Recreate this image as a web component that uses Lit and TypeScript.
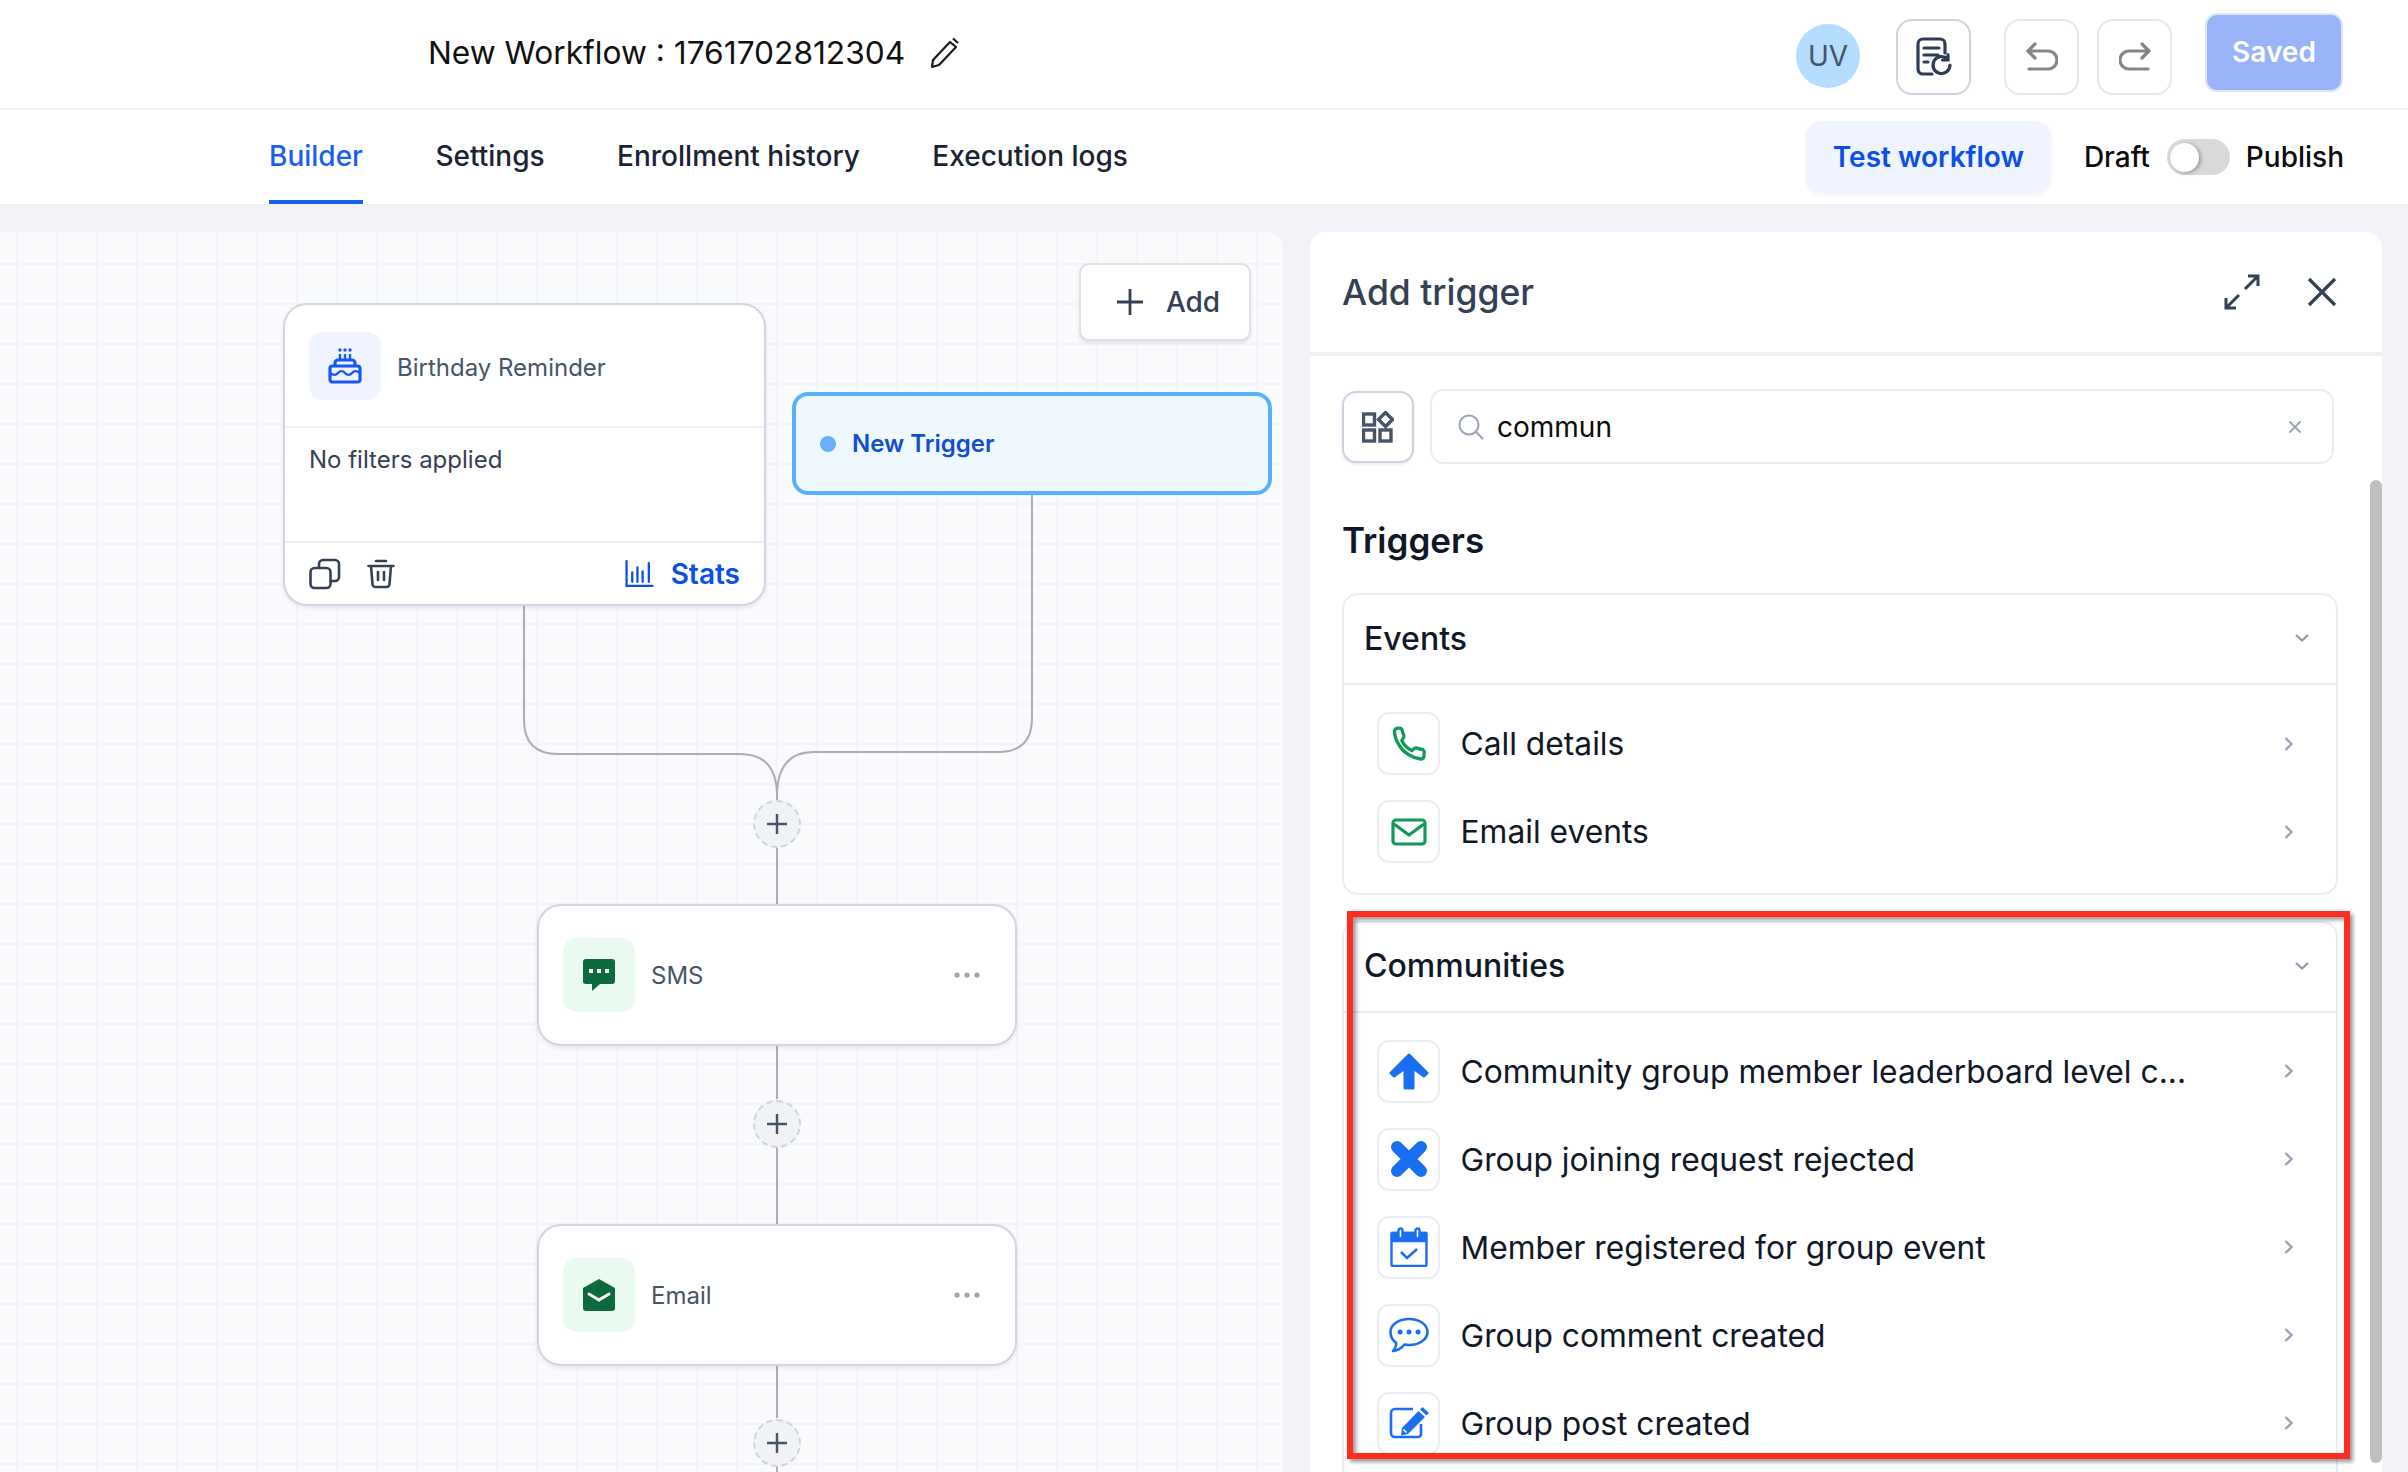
import { LitElement, css, html } from "lit";
import { customElement } from "lit/decorators.js";

const chevronRight = html`<svg class="chev-r" width="10" height="16" viewBox="0 0 10 16" fill="none" stroke="#98a2b8" stroke-width="2.4"><path d="M1.5 2l6 6-6 6" /></svg>`;
const chevronDown = html`<svg width="16" height="10" viewBox="0 0 16 10" fill="none" stroke="#8f99ad" stroke-width="2.2"><path d="M2 2l6 5.5L14 2" /></svg>`;

const phoneIcon = html`<svg width="36" height="36" viewBox="0 0 24 24" fill="none" stroke="#109a55" stroke-width="2.2" stroke-linejoin="round"><path d="M22 18.4v1.6a2 2 0 0 1-2.2 2 17.8 17.8 0 0 1-8-2.9 17.5 17.5 0 0 1-6.4-6.4 17.8 17.8 0 0 1-3.1-9.5A2.6 2.6 0 0 1 4.9 1.4h.6a2 2 0 0 1 2 1.7c.1.9.6 2.1 1 3a2 2 0 0 1-.4 2.1L7.2 9.8a15 15 0 0 0 6.6 6.6l1.6-1.3a2 2 0 0 1 2.100-.4c.8.4 1.900.7 2.800.8A2 2 0 0 1 22 18.400z" /></svg>`;
const mailIcon = html`<svg width="36" height="30" viewBox="0 0 36 30" fill="none" stroke="#109a55" stroke-width="3.2" stroke-linejoin="round"><rect x="2" y="3" width="32" height="24" rx="3" /><path d="M3 7l15 11L33 7" /></svg>`;
const arrowIcon = html`<svg width="40" height="37" viewBox="0 0 40 37" fill="#1a6ff0" stroke="#1a6ff0" stroke-width="3" stroke-linejoin="round"><path d="M20 2L38 20l-3 3-11-8v20h-8V15L5 23l-3-3z" /></svg>`;
const crossIcon = html`<svg width="38" height="38" viewBox="0 0 38 38" fill="none" stroke="#1a6ff0" stroke-width="12" stroke-linecap="round"><path d="M7 7l24 24M31 7L7 31" /></svg>`;
const calendarIcon = html`<svg width="38" height="40" viewBox="0 0 38 40" fill="none" stroke="#1a6ff0" stroke-width="2.400"><rect x="1.500" y="6" width="35" height="33" rx="1.500" /><path d="M2 6h34v8H2z" fill="#1a6ff0" /><rect x="8.500" y="1.500" width="4" height="10" rx="2" fill="#fff" /><rect x="25.500" y="1.500" width="4" height="10" rx="2" fill="#fff" /><path d="M11 25l6 6 10-9" stroke-width="2.600" /></svg>`;
const commentIcon = html`<svg width="40" height="36" viewBox="0 0 40 36" fill="none" stroke="#1a6ff0" stroke-width="2.600"><path d="M20 2c10.500 0 18.500 5.800 18.500 13S30.500 28 20 28c-1.600 0-3.100-.1-4.500-.4C13 31 8.500 33.500 4 34c2-1.700 3-4.300 3.300-8C3.800 23.500 1.500 19.500 1.500 15 1.500 7.800 9.500 2 20 2z" stroke-linejoin="round" /><g fill="#1a6ff0" stroke="none"><circle cx="11" cy="15" r="2.500" /><circle cx="20" cy="15" r="2.500" /><circle cx="29" cy="15" r="2.500" /></g></svg>`;
const editIcon = html`<svg width="40" height="32" viewBox="0 0 40 32" fill="none"><path d="M24 2H6a4 4 0 0 0-4 4v20a4 4 0 0 0 4 4h23a3 3 0 0 0 3-3V17" stroke="#1a6ff0" stroke-width="2.600" /><path d="M33.500 0l6.500 6-2.500 2.500-6.500-6zM29.500 4l6.500 6-17 17-7 1.500 1-7.500z" fill="#1a6ff0" /><path d="M14.500 22.500l3 3" stroke="#fff" stroke-width="1.600" /></svg>`;

const copyIcon = html`<svg width="32" height="32" viewBox="0 0 32 32" fill="none" stroke="#344054" stroke-width="2.600"><rect x="1.500" y="10" width="20" height="20" rx="4" /><path d="M10 10V6a4 4 0 0 1 4-4h12a4 4 0 0 1 4 4v13a4 4 0 0 1-4 4h-4" /></svg>`;
const trashIcon = html`<svg width="28" height="30" viewBox="0 0 28 30" fill="none" stroke="#344054" stroke-width="2.600" stroke-linecap="round"><path d="M9 2h10M1.500 7h25M4 7l1.500 18a3 3 0 0 0 3 3h11a3 3 0 0 0 3-3L24 7M11 13v8M17 13v8" /></svg>`;
const statsIcon = html`<svg width="29" height="29" viewBox="0 0 28 28" fill="none" stroke="#0a4fe8" stroke-width="2.200" stroke-linecap="round"><path d="M1.500 2v24h25M7 13v9M12 8v14M17 12v10M23 4v18" /></svg>`;
const cakeIcon = html`<svg width="34" height="36" viewBox="0 0 34 36" fill="none" stroke="#1757f5" stroke-width="3.200"><g fill="#1757f5" stroke="none"><circle cx="12" cy="2" r="1.700" /><circle cx="17" cy="2" r="1.700" /><circle cx="22" cy="2" r="1.700" /><rect x="10.800" y="6" width="2.400" height="6" /><rect x="15.800" y="6" width="2.400" height="6" /><rect x="20.800" y="6" width="2.400" height="6" /></g><path d="M7 18v-3a3 3 0 0 1 3-3h14a3 3 0 0 1 3 3v3" /><rect x="2" y="18" width="30" height="16" rx="2.500" /><path d="M2 25c3 2.500 6 2.500 8 0s5-2.500 7 0 5 2.500 7 0 5-2.500 8 0" stroke-width="2.400" /></svg>`;

const rowsEvents = [
  { icon: phoneIcon, label: "Call details" },
  { icon: mailIcon, label: "Email events" },
];

const rowsCommunities = [
  { icon: arrowIcon, label: "Community group member leaderboard level c..." },
  { icon: crossIcon, label: "Group joining request rejected" },
  { icon: calendarIcon, label: "Member registered for group event" },
  { icon: commentIcon, label: "Group comment created" },
  { icon: editIcon, label: "Group post created" },
];

@customElement("app-root")
export class AppRoot extends LitElement {
  private section(title: string, rows: { icon: unknown; label: string }[]) {
    return html`
      <div class="section">
        <div class="section-head">
          <span>${title}</span>
          ${chevronDown}
        </div>
        <div class="section-body">
          ${rows.map(
            (r) => html`
              <div class="row">
                <div class="row-icon">${r.icon}</div>
                <div class="row-label">${r.label}</div>
                ${chevronRight}
              </div>
            `
          )}
        </div>
      </div>
    `;
  }

  private addStep(top: number) {
    return html`
      <div class="add-step" style="top:${top}px">
        <svg width="22" height="22" viewBox="0 0 22 22" stroke="#475467" stroke-width="2.400"><path d="M11 1v20M1 11h20" /></svg>
      </div>
    `;
  }

  private stepNode(top: number, label: string, icon: unknown) {
    return html`
      <div class="step-node" style="top:${top}px">
        <div class="step-icon">${icon}</div>
        <div class="step-label">${label}</div>
        <svg width="26" height="6" viewBox="0 0 26 6" fill="#9ca3b4"><circle cx="3" cy="3" r="2.600" /><circle cx="13" cy="3" r="2.600" /><circle cx="23" cy="3" r="2.600" /></svg>
      </div>
    `;
  }

  render() {
    return html`
      <header class="topbar">
        <div class="title">New Workflow : 1761702812304</div>
        <svg class="pencil" width="30" height="32" viewBox="0 0 30 32" fill="none" stroke="#1a1a1a" stroke-width="2.200" stroke-linejoin="round"><path d="M20 5l6 5L9 28l-7 2 1-7zM23 1.500l5 4.500" /></svg>
        <div class="spacer"></div>
        <div class="avatar">UV</div>
        <button class="icon-btn strong">
          <svg width="38" height="40" viewBox="0 0 38 40" fill="none" stroke="#2e3d55" stroke-width="3.200" stroke-linecap="round"><path d="M17 37H8a5 5 0 0 1-5-5V7a5 5 0 0 1 5-5h17a5 5 0 0 1 5 5v9" /><path d="M9 11h15M9 18h14M9 25h4" /><path d="M35 28a8.500 8.500 0 1 1-2.500-6M33 17.500V23h-5.500" /></svg>
        </button>
        <button class="icon-btn undo">
          <svg width="32" height="30" viewBox="0 0 32 30" fill="none" stroke="#858585" stroke-width="3.200" stroke-linecap="round"><path d="M9 2L2 9l7 7M3 9h19a8.500 8.500 0 0 1 0 18H3" /></svg>
        </button>
        <button class="icon-btn redo">
          <svg width="32" height="30" viewBox="0 0 32 30" fill="none" stroke="#858585" stroke-width="3.200" stroke-linecap="round"><path d="M23 2l7 7-7 7M29 9H10a8.500 8.500 0 0 0 0 18h19" /></svg>
        </button>
        <button class="saved">Saved</button>
      </header>

      <nav class="tabs">
        <a class="tab active">Builder</a>
        <a class="tab">Settings</a>
        <a class="tab">Enrollment history</a>
        <a class="tab">Execution logs</a>
        <div class="spacer"></div>
        <button class="test">Test workflow</button>
        <span class="state first">Draft</span>
        <span class="toggle"><span class="knob"></span></span>
        <span class="state">Publish</span>
      </nav>

      <main class="main">
        <section class="canvas">
          <svg class="wires" width="1283" height="1240" viewBox="0 232 1283 1240" fill="none" stroke="#aeaeb2" stroke-width="2">
            <path d="M524 603V720Q524 754 558 754H740Q777 754 777 796V800" />
            <path d="M1032 494V718Q1032 752 998 752H814Q777 752 777 796" />
            <path d="M777 847V904M777 1044V1099M777 1146V1224M777 1364V1418M777 1466V1472" />
          </svg>

          <button class="add">
            <svg width="28" height="28" viewBox="0 0 28 28" stroke="#344054" stroke-width="2.800"><path d="M14 1v26M1 14h26" /></svg>
            Add
          </button>

          <div class="trigger-card">
            <div class="trigger-head">
              <div class="cake-box">${cakeIcon}</div>
              <span>Birthday Reminder</span>
            </div>
            <div class="trigger-mid">No filters applied</div>
            <div class="trigger-foot">
              ${copyIcon}${trashIcon}
              <div class="spacer"></div>
              ${statsIcon}
              <span class="stats">Stats</span>
            </div>
          </div>

          <div class="new-trigger"><i></i>New Trigger</div>

          ${this.addStep(568)}
          ${this.stepNode(
            672,
            "SMS",
            html`<svg width="32" height="33" viewBox="0 0 32 33" fill="#0b6b3e"><path d="M3 0h26a3 3 0 0 1 3 3v19a3 3 0 0 1-3 3H17l-8 7v-7H3a3 3 0 0 1-3-3V3a3 3 0 0 1 3-3z" /><g fill="#fff"><rect x="6" y="10" width="4" height="4" /><rect x="14" y="10" width="4" height="4" /><rect x="22" y="10" width="4" height="4" /></g></svg>`
          )}
          ${this.addStep(868)}
          ${this.stepNode(
            992,
            "Email",
            html`<svg width="32" height="32" viewBox="0 0 32 32" fill="#0b6b3e"><path d="M16 0l16 9v20a3 3 0 0 1-3 3H3a3 3 0 0 1-3-3V9z" /><path d="M6 15l10 6 10-6" fill="none" stroke="#fff" stroke-width="3" stroke-linecap="round" /></svg>`
          )}
          ${this.addStep(1187)}
        </section>

        <aside class="panel">
          <div class="panel-head">
            <span>Add trigger</span>
            <div class="spacer"></div>
            <svg width="36" height="36" viewBox="0 0 36 36" fill="none" stroke="#344054" stroke-width="3"><path d="M21 15L34 2M24 2h10v10M15 21L2 34M2 24v10h10" /></svg>
            <svg class="close" width="30" height="30" viewBox="0 0 30 30" fill="none" stroke="#344054" stroke-width="3.200"><path d="M2 2l26 26M28 2L2 28" /></svg>
          </div>
          <div class="panel-body">
            <div class="search-row">
              <button class="filter">
                <svg width="32" height="32" viewBox="0 0 32 32" fill="none" stroke="#475467" stroke-width="3.400"><rect x="1.500" y="3" width="11" height="11" /><rect x="1.500" y="19" width="11" height="11" /><rect x="18" y="19" width="11" height="11" /><path d="M23.500 1.500l7 7-7 7-7-7z" /></svg>
              </button>
              <div class="search">
                <svg width="26" height="26" viewBox="0 0 26 26" fill="none" stroke="#98a2b8" stroke-width="2"><circle cx="11" cy="11" r="9.500" /><path d="M18 18l7 7" /></svg>
                <span class="query">commun</span>
                <div class="spacer"></div>
                <svg width="14" height="14" viewBox="0 0 14 14" fill="none" stroke="#98a2b8" stroke-width="1.800"><path d="M1.500 1.500l11 11M12.500 1.500l-11 11" /></svg>
              </div>
            </div>
            <h2>Triggers</h2>
            ${this.section("Events", rowsEvents)}
            ${this.section("Communities", rowsCommunities)}
          </div>
          <div class="scrollbar"></div>
          <div class="highlight"></div>
        </aside>
      </main>
    `;
  }

  static styles = css`
    :host {
      display: block;
      width: 2408px;
      height: 1472px;
      overflow: hidden;
      position: relative;
      background: #f1f3f8;
      font-family: "Inter", "Liberation Sans", sans-serif;
      color: #101828;
    }
    button {
      font-family: inherit;
      cursor: pointer;
    }
    .spacer {
      flex: 1;
    }

    .topbar {
      height: 108px;
      border-bottom: 2px solid #eeeef3;
      background: #fff;
      display: flex;
      align-items: center;
      padding: 0 65px 0 428px;
    }
    .title {
      font-size: 31.7px;
      color: #111;
      white-space: nowrap;
      margin-top: -3px;
    }
    .pencil {
      margin-left: 25px;
      margin-top: -3px;
    }
    .avatar {
      width: 64px;
      height: 64px;
      border-radius: 50%;
      background: #b3dcff;
      color: #475467;
      font-size: 28px;
      display: flex;
      align-items: center;
      justify-content: center;
      margin-right: 36px;
      margin-top: 4px;
    }
    .icon-btn {
      width: 75px;
      height: 76px;
      border-radius: 16px;
      border: 2px solid #e5e7ee;
      background: #fff;
      display: flex;
      align-items: center;
      justify-content: center;
      padding: 0;
      margin-top: 6px;
    }
    .icon-btn.strong {
      border-color: #ced3e0;
      margin-right: 33px;
    }
    .icon-btn.undo {
      margin-right: 18px;
    }
    .saved {
      width: 138px;
      height: 79px;
      margin-left: 33px;
      margin-top: -4px;
      border-radius: 12px;
      border: 2px solid #dbe5fd;
      background: #98b3f8;
      color: #fff;
      font-size: 28px;
      font-weight: 600;
    }

    .tabs {
      height: 94px;
      border-bottom: 1px solid #eceef2;
      background: #fff;
      display: flex;
      align-items: center;
      gap: 72.5px;
      padding: 0 64px 0 269px;
    }
    .tab {
      height: 94px;
      box-sizing: border-box;
      padding-top: 2px;
      display: flex;
      align-items: center;
      font-size: 28px;
      font-weight: 500;
      color: #1a2333;
      border-bottom: 4px solid transparent;
    }
    .tab.active {
      color: #1660f0;
      border-bottom-color: #1660f0;
    }
    .test {
      width: 245px;
      height: 72px;
      margin-right: -39.5px;
      border: none;
      border-radius: 16px;
      background: #eff4ff;
      color: #0a4fe8;
      font-size: 28px;
      font-weight: 600;
      box-shadow: 0 2px 4px rgba(16, 24, 40, 0.05);
    }
    .state {
      font-size: 28px;
      font-weight: 500;
      color: #0b0b0b;
      margin-left: -56.5px;
    }
    .state.first {
      margin-left: 0;
    }
    .toggle {
      width: 63px;
      height: 36px;
      border-radius: 18px;
      background: #d9d9d9;
      margin-left: -55.5px;
      display: flex;
      align-items: center;
      padding-left: 3px;
      box-sizing: border-box;
    }
    .knob {
      width: 29px;
      height: 29px;
      border-radius: 50%;
      background: #fff;
      box-shadow: 2px 1px 4px rgba(0, 0, 0, 0.3);
    }

    .main {
      display: flex;
      gap: 27px;
      padding-top: 27px;
      height: 1240px;
      box-sizing: border-box;
    }
    .canvas {
      position: relative;
      width: 1283px;
      height: 1240px;
      flex: none;
      overflow: hidden;
      border-top-right-radius: 16px;
      background-color: #f9fafc;
      background-image: linear-gradient(#f3f4f8 2px, transparent 2px),
        linear-gradient(90deg, #f3f4f8 2px, transparent 2px);
      background-size: 40px 40px;
      background-position: 16px 31px;
    }
    .wires {
      position: absolute;
      left: 0;
      top: 0;
    }
    .add {
      position: absolute;
      left: 1079px;
      top: 31px;
      width: 172px;
      height: 78px;
      background: #fff;
      border: 2px solid #e0e2e8;
      border-radius: 10px;
      box-shadow: 0 2px 3px rgba(16, 24, 40, 0.1);
      display: flex;
      align-items: center;
      justify-content: center;
      gap: 22px;
      font-size: 28px;
      font-weight: 500;
      color: #344054;
      padding: 0 0 0 6px;
    }
    .trigger-card {
      position: absolute;
      left: 283px;
      top: 71px;
      width: 483px;
      height: 303px;
      box-sizing: border-box;
      background: #fff;
      border: 2px solid #d3d6e0;
      border-radius: 24px;
      box-shadow: 0 2px 4px rgba(16, 24, 40, 0.08);
      display: flex;
      flex-direction: column;
      overflow: hidden;
    }
    .trigger-head {
      height: 123px;
      flex: none;
      box-sizing: border-box;
      border-bottom: 2px solid #eeeff3;
      display: flex;
      align-items: center;
      padding-left: 24px;
      font-size: 24px;
      color: #475467;
    }
    .trigger-head span {
      padding-top: 3px;
    }
    .cake-box {
      width: 72px;
      height: 68px;
      border-radius: 14px;
      background: #eff4ff;
      display: flex;
      align-items: center;
      justify-content: center;
      margin-right: 16px;
    }
    .trigger-mid {
      flex: 1;
      padding: 17px 24px 0;
      font-size: 24px;
      line-height: 29px;
      color: #344054;
    }
    .trigger-foot {
      height: 63px;
      flex: none;
      box-sizing: border-box;
      border-top: 2px solid #eeeff3;
      display: flex;
      align-items: center;
      padding: 0 24px;
      gap: 26px;
    }
    .stats {
      font-size: 28px;
      font-weight: 600;
      color: #0a4fe8;
      margin-left: -9px;
    }
    .new-trigger {
      position: absolute;
      left: 792px;
      top: 160px;
      width: 480px;
      height: 103px;
      box-sizing: border-box;
      background: #eff7ff;
      border: 4px solid #59b0ff;
      border-radius: 16px;
      display: flex;
      align-items: center;
      padding-left: 24px;
      gap: 16px;
      font-size: 24px;
      font-weight: 600;
      color: #0f4fd0;
    }
    .new-trigger i {
      width: 16px;
      height: 16px;
      border-radius: 50%;
      background: #6aaefc;
    }
    .add-step {
      position: absolute;
      left: 753px;
      width: 48px;
      height: 48px;
      box-sizing: border-box;
      border-radius: 50%;
      border: 2px dashed #d0d3dc;
      background: #f1f2f6;
      display: flex;
      align-items: center;
      justify-content: center;
    }
    .step-node {
      position: absolute;
      left: 537px;
      width: 480px;
      height: 142px;
      box-sizing: border-box;
      background: #fff;
      border: 2px solid #d3d6e0;
      border-radius: 24px;
      box-shadow: 0 2px 4px rgba(16, 24, 40, 0.08);
      display: flex;
      align-items: center;
      padding: 0 35px 0 24px;
    }
    .step-icon {
      width: 72px;
      height: 74px;
      border-radius: 14px;
      background: #e9faf1;
      display: flex;
      align-items: center;
      justify-content: center;
      margin-right: 16px;
    }
    .step-label {
      flex: 1;
      font-size: 24px;
      color: #475467;
    }

    .panel {
      position: relative;
      width: 1072px;
      height: 1240px;
      flex: none;
      overflow: hidden;
      background: #fff;
      border-radius: 16px 16px 0 0;
    }
    .panel-head {
      height: 120px;
      border-bottom: 4px solid #eeeff3;
      display: flex;
      align-items: center;
      padding: 0 45px 0 32px;
      font-size: 35.5px;
      font-weight: 500;
      color: #344054;
    }
    .close {
      margin-left: 47px;
    }
    .panel-body {
      padding: 33px 44px 0 32px;
    }
    .search-row {
      display: flex;
      align-items: center;
      gap: 16px;
      padding-right: 4px;
    }
    .filter {
      width: 72px;
      height: 72px;
      flex: none;
      padding: 0;
      background: #fff;
      border: 2px solid #ced3e0;
      border-radius: 14px;
      box-shadow: 0 2px 3px rgba(16, 24, 40, 0.08);
      display: flex;
      align-items: center;
      justify-content: center;
    }
    .search {
      flex: 1;
      height: 75px;
      box-sizing: border-box;
      border: 2px solid #ebecf1;
      border-radius: 14px;
      display: flex;
      align-items: center;
      padding: 0 30px 0 26px;
    }
    .query {
      font-size: 28px;
      color: #0b0b0b;
      margin-left: 13px;
    }
    h2 {
      margin: 55px 0 32px;
      font-size: 35px;
      line-height: 42px;
      font-weight: 600;
      color: #101828;
    }
    .section {
      border: 2px solid #ebecf1;
      border-radius: 16px;
      margin-bottom: 25.5px;
    }
    .section-head {
      height: 90px;
      box-sizing: border-box;
      border-bottom: 2px solid #ebecf1;
      display: flex;
      align-items: center;
      justify-content: space-between;
      padding: 0 26px 2px 20px;
      font-size: 32px;
      font-weight: 500;
      color: #101828;
    }
    .section-body {
      padding: 27px 0 30px 33px;
      display: flex;
      flex-direction: column;
      gap: 25px;
    }
    .row {
      display: flex;
      align-items: center;
      height: 63px;
      padding-right: 42px;
    }
    .row-icon {
      width: 63px;
      height: 63px;
      box-sizing: border-box;
      flex: none;
      border: 2px solid #ecedf2;
      border-radius: 12px;
      display: flex;
      align-items: center;
      justify-content: center;
    }
    .row-label {
      flex: 1;
      margin-left: 20.5px;
      font-size: 31.75px;
      color: #101828;
      white-space: nowrap;
    }
    .scrollbar {
      position: absolute;
      right: 0;
      top: 248px;
      width: 12px;
      height: 983px;
      border-radius: 6px;
      background: #bfbfbf;
    }
    .highlight {
      position: absolute;
      left: 37px;
      top: 679px;
      width: 1003px;
      height: 548px;
      box-sizing: border-box;
      border: 6px solid #ff2d20;
      box-shadow: 3px 3px 4px rgba(0, 0, 0, 0.4), inset 3px 3px 4px rgba(0, 0, 0, 0.4);
    }
  `;
}
